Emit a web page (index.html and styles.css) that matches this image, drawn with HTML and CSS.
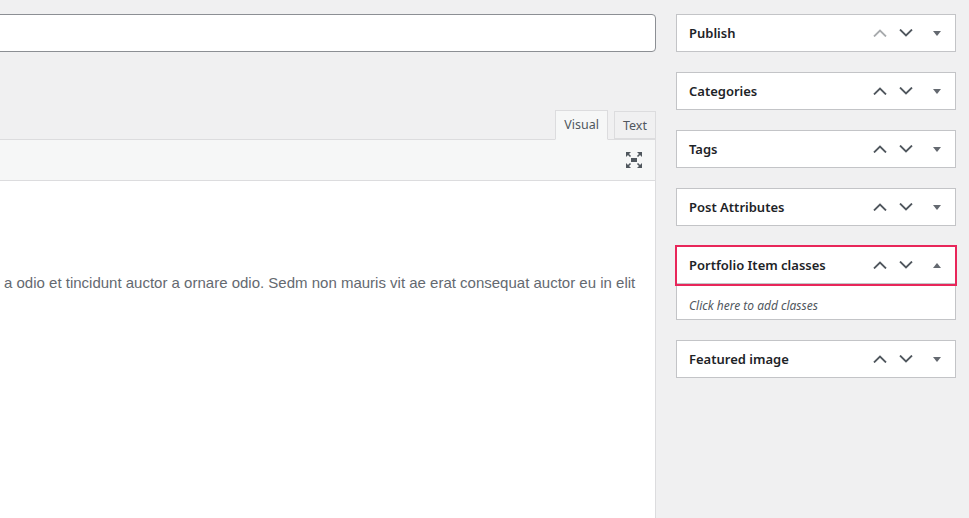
FILE: index.html
```html
<!DOCTYPE html>
<html lang="en">
<head>
<meta charset="utf-8">
<title>Edit Portfolio Item</title>
<link rel="stylesheet" href="styles.css">
</head>
<body>
<div class="layout">
  <main class="main">
    <div class="title-input"></div>
    <div class="editor">
      <div class="tabs">
        <span class="tab tab-active">Visual</span>
        <span class="tab">Text</span>
      </div>
      <div class="toolbar">
        <svg class="fs-icon" width="16" height="16" viewBox="0 0 16 16">
          <rect x="5" y="6" width="6" height="4" fill="#50575e"/>
          <g fill="#50575e">
            <polygon points="0,0 5,0 0,5"/>
            <polygon points="16,0 11,0 16,5"/>
            <polygon points="0,16 5,16 0,11"/>
            <polygon points="16,16 11,16 16,11"/>
          </g>
          <g stroke="#50575e" stroke-width="1.6">
            <line x1="1.5" y1="1.5" x2="4.5" y2="4.5"/>
            <line x1="14.5" y1="1.5" x2="11.5" y2="4.5"/>
            <line x1="1.5" y1="14.5" x2="4.5" y2="11.5"/>
            <line x1="14.5" y1="14.5" x2="11.5" y2="11.5"/>
          </g>
        </svg>
      </div>
      <div class="content">
        <p>a odio et tincidunt auctor a ornare odio. Sedm non mauris vit ae erat consequat auctor eu in elit</p>
      </div>
    </div>
  </main>
  <aside class="sidebar">
    <section class="postbox">
      <div class="postbox-header">
        <h2>Publish</h2>
        <div class="handles">
          <span class="hbtn disabled"><svg width="14" height="8" viewBox="0 0 14 8"><path d="M1 7.5 L7 1.5 L13 7.5" fill="none" stroke="currentColor" stroke-width="1.8"/></svg></span>
          <span class="hbtn"><svg width="14" height="8" viewBox="0 0 14 8"><path d="M1 0.5 L7 6.5 L13 0.5" fill="none" stroke="currentColor" stroke-width="1.8"/></svg></span>
          <span class="toggle"><svg width="8" height="5" viewBox="0 0 8 5"><polygon points="0,0 8,0 4,5" fill="currentColor"/></svg></span>
        </div>
      </div>
    </section>
    <section class="postbox">
      <div class="postbox-header">
        <h2>Categories</h2>
        <div class="handles">
          <span class="hbtn"><svg width="14" height="8" viewBox="0 0 14 8"><path d="M1 7.5 L7 1.5 L13 7.5" fill="none" stroke="currentColor" stroke-width="1.8"/></svg></span>
          <span class="hbtn"><svg width="14" height="8" viewBox="0 0 14 8"><path d="M1 0.5 L7 6.5 L13 0.5" fill="none" stroke="currentColor" stroke-width="1.8"/></svg></span>
          <span class="toggle"><svg width="8" height="5" viewBox="0 0 8 5"><polygon points="0,0 8,0 4,5" fill="currentColor"/></svg></span>
        </div>
      </div>
    </section>
    <section class="postbox">
      <div class="postbox-header">
        <h2>Tags</h2>
        <div class="handles">
          <span class="hbtn"><svg width="14" height="8" viewBox="0 0 14 8"><path d="M1 7.5 L7 1.5 L13 7.5" fill="none" stroke="currentColor" stroke-width="1.8"/></svg></span>
          <span class="hbtn"><svg width="14" height="8" viewBox="0 0 14 8"><path d="M1 0.5 L7 6.5 L13 0.5" fill="none" stroke="currentColor" stroke-width="1.8"/></svg></span>
          <span class="toggle"><svg width="8" height="5" viewBox="0 0 8 5"><polygon points="0,0 8,0 4,5" fill="currentColor"/></svg></span>
        </div>
      </div>
    </section>
    <section class="postbox">
      <div class="postbox-header">
        <h2>Post Attributes</h2>
        <div class="handles">
          <span class="hbtn"><svg width="14" height="8" viewBox="0 0 14 8"><path d="M1 7.5 L7 1.5 L13 7.5" fill="none" stroke="currentColor" stroke-width="1.8"/></svg></span>
          <span class="hbtn"><svg width="14" height="8" viewBox="0 0 14 8"><path d="M1 0.5 L7 6.5 L13 0.5" fill="none" stroke="currentColor" stroke-width="1.8"/></svg></span>
          <span class="toggle"><svg width="8" height="5" viewBox="0 0 8 5"><polygon points="0,0 8,0 4,5" fill="currentColor"/></svg></span>
        </div>
      </div>
    </section>
    <section class="postbox open">
      <div class="postbox-header highlight">
        <h2>Portfolio Item classes</h2>
        <div class="handles">
          <span class="hbtn"><svg width="14" height="8" viewBox="0 0 14 8"><path d="M1 7.5 L7 1.5 L13 7.5" fill="none" stroke="currentColor" stroke-width="1.8"/></svg></span>
          <span class="hbtn"><svg width="14" height="8" viewBox="0 0 14 8"><path d="M1 0.5 L7 6.5 L13 0.5" fill="none" stroke="currentColor" stroke-width="1.8"/></svg></span>
          <span class="toggle"><svg width="8" height="5" viewBox="0 0 8 5"><polygon points="0,5 8,5 4,0" fill="currentColor"/></svg></span>
        </div>
      </div>
      <div class="postbox-body">
        <em>Click here to add classes</em>
      </div>
    </section>
    <section class="postbox">
      <div class="postbox-header">
        <h2>Featured image</h2>
        <div class="handles">
          <span class="hbtn"><svg width="14" height="8" viewBox="0 0 14 8"><path d="M1 7.5 L7 1.5 L13 7.5" fill="none" stroke="currentColor" stroke-width="1.8"/></svg></span>
          <span class="hbtn"><svg width="14" height="8" viewBox="0 0 14 8"><path d="M1 0.5 L7 6.5 L13 0.5" fill="none" stroke="currentColor" stroke-width="1.8"/></svg></span>
          <span class="toggle"><svg width="8" height="5" viewBox="0 0 8 5"><polygon points="0,0 8,0 4,5" fill="currentColor"/></svg></span>
        </div>
      </div>
    </section>
  </aside>
</div>
</body>
</html>
```

FILE: styles.css
```css
html, body {
  margin: 0;
  padding: 0;
  height: 100%;
  overflow: hidden;
}
body {
  background: #f0f0f1;
  font-family: "Noto Sans", "Open Sans", sans-serif;
  color: #1d2327;
}
.layout {
  display: flex;
  gap: 20px;
  padding-top: 14px;
  margin-left: -10px;
  height: 100%;
  box-sizing: border-box;
}
.main {
  width: 666px;
  flex: none;
  display: flex;
  flex-direction: column;
}
.title-input {
  height: 38px;
  box-sizing: border-box;
  background: #fff;
  border: 1px solid #8c8f94;
  border-radius: 4px;
}
.editor {
  margin-top: 58px;
  flex: 1;
  display: flex;
  flex-direction: column;
}
.tabs {
  display: flex;
  justify-content: flex-end;
  gap: 6px;
  height: 29px;
  align-items: flex-end;
}
.tab {
  font-family: "Noto Sans", sans-serif;
  font-size: 12.5px;
  color: #50575e;
  background: #f0f0f1;
  border: 1px solid #dcdcde;
  height: 28px;
  box-sizing: border-box;
  padding: 0 8px;
  line-height: 27px;
}
.tab-active {
  background: #f6f7f7;
  border-bottom-color: #f6f7f7;
  height: 30px;
  line-height: 28px;
  margin-bottom: -1px;
  position: relative;
  z-index: 1;
}
.toolbar {
  height: 42px;
  box-sizing: border-box;
  background: #f6f7f7;
  border: 1px solid #dcdcde;
  border-left: none;
  display: flex;
  align-items: center;
  justify-content: flex-end;
  padding-right: 13px;
  padding-bottom: 1px;
}
.content {
  flex: 1;
  background: #fff;
  border-right: 1px solid #dcdcde;
  padding: 0 0 0 14px;
}
.content p {
  margin: 92px 0 0;
  font-family: "Liberation Sans", Arial, sans-serif;
  font-size: 15px;
  line-height: 20px;
  color: #646970;
  white-space: nowrap;
}
.sidebar {
  width: 280px;
  flex: none;
  display: flex;
  flex-direction: column;
  gap: 20px;
}
.postbox {
  background: #fff;
  border: 1px solid #c3c4c7;
}
.postbox-header {
  height: 36px;
  display: flex;
  align-items: center;
  justify-content: space-between;
  padding-left: 12px;
}
.postbox.open .postbox-header {
  border-bottom: 1px solid #c3c4c7;
}
.postbox-header.highlight {
  box-shadow: 0 0 0 2px #e8265a;
  position: relative;
}
.postbox-header h2 {
  margin: 0;
  font-size: 13px;
  font-weight: 600;
  color: #1d2327;
}
.handles {
  display: flex;
  align-items: center;
  height: 100%;
}
.hbtn {
  width: 26px;
  height: 100%;
  display: flex;
  align-items: center;
  justify-content: center;
  color: #50575e;
}
.hbtn.disabled {
  color: #a7aaad;
}
.toggle {
  width: 36px;
  height: 100%;
  display: flex;
  align-items: center;
  justify-content: center;
  color: #646970;
}
.postbox-body {
  height: 35px;
  box-sizing: border-box;
  padding: 8px 0 0 12px;
  display: flex;
  align-items: center;
  font-size: 12px;
  color: #50575e;
}
```
